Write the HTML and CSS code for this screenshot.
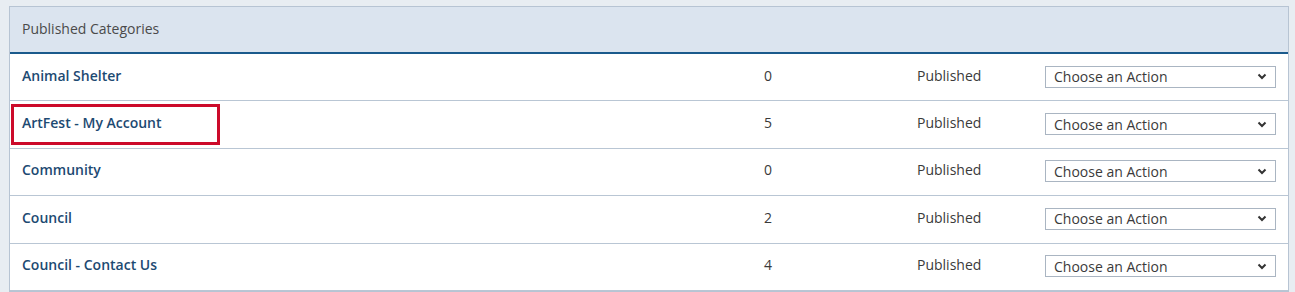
FILE: index.html
```html
<!DOCTYPE html>
<html>
  <head>
    <meta charset="UTF-8" />
    <meta name="viewport" content="width=device-width, initial-scale=1.0" />
    <title>Published Categories</title>
    <link rel="stylesheet" href="styles.css">
  </head>
  <body>
    <div class="panel">
      <div class="panel-head">Published Categories</div>

      <div class="row">
        <a class="name" href="#">Animal Shelter</a>
        <span class="count">0</span>
        <span class="status">Published</span>
        <span class="action">
          <select><option>Choose an Action</option></select>
        </span>
      </div>

      <div class="row marked">
        <a class="name" href="#">ArtFest - My Account</a>
        <span class="count">5</span>
        <span class="status">Published</span>
        <span class="action">
          <select><option>Choose an Action</option></select>
        </span>
      </div>

      <div class="row">
        <a class="name" href="#">Community</a>
        <span class="count">0</span>
        <span class="status">Published</span>
        <span class="action">
          <select><option>Choose an Action</option></select>
        </span>
      </div>

      <div class="row">
        <a class="name" href="#">Council</a>
        <span class="count">2</span>
        <span class="status">Published</span>
        <span class="action">
          <select><option>Choose an Action</option></select>
        </span>
      </div>

      <div class="row">
        <a class="name" href="#">Council - Contact Us</a>
        <span class="count">4</span>
        <span class="status">Published</span>
        <span class="action">
          <select><option>Choose an Action</option></select>
        </span>
      </div>
    </div>
  </body>
</html>
```

FILE: styles.css
```css
* {
  box-sizing: border-box;
  margin: 0;
  padding: 0;
}

body {
  background-color: #e8edf2;
  font-family: "Open Sans", Lato, Arial, sans-serif;
  font-size: 14px;
  line-height: 18px;
  color: #3a3a3a;
  padding: 6px 6px 0 9px;
}

.panel {
  background-color: #fff;
  border: 1px solid #b7c4d3;
}

.panel-head {
  height: 47px;
  display: flex;
  align-items: center;
  padding: 0 12px 2px;
  background-color: #dbe4ef;
  border-bottom: 2px solid #1a5a8c;
  color: #4a4a4a;
}

.row {
  position: relative;
  display: grid;
  grid-template-columns: 621px 274px 128px 1fr;
  align-items: center;
  height: 47.4px;
  padding-bottom: 3px;
  border-bottom: 1px solid #b9c6d4;
}

.row > * {
  padding: 0 12px;
}

.name {
  font-weight: 600;
  color: #1d4a72;
  text-decoration: none;
}

.count {
  text-align: center;
}

.action select {
  display: block;
  width: 231px;
  height: 22px;
  margin-top: 2px;
  padding: 0 24px 0 8px;
  border: 1px solid #aab5c2;
  border-radius: 0;
  background: #fff url("data:image/svg+xml,%3Csvg xmlns='http://www.w3.org/2000/svg' width='10' height='7' viewBox='0 0 10 7'%3E%3Cpath d='M1.5 1.5l3.5 3.5 3.5-3.5' fill='none' stroke='%23333' stroke-width='2'/%3E%3C/svg%3E") no-repeat right 8px center;
  -webkit-appearance: none;
  appearance: none;
  font-family: inherit;
  font-size: 14px;
  color: #3a3a3a;
}

.marked::after {
  content: "";
  position: absolute;
  box-sizing: border-box;
  left: 1px;
  top: 3px;
  width: 209px;
  height: 41px;
  border: 3px solid #cc0a2a;
  pointer-events: none;
}
```
